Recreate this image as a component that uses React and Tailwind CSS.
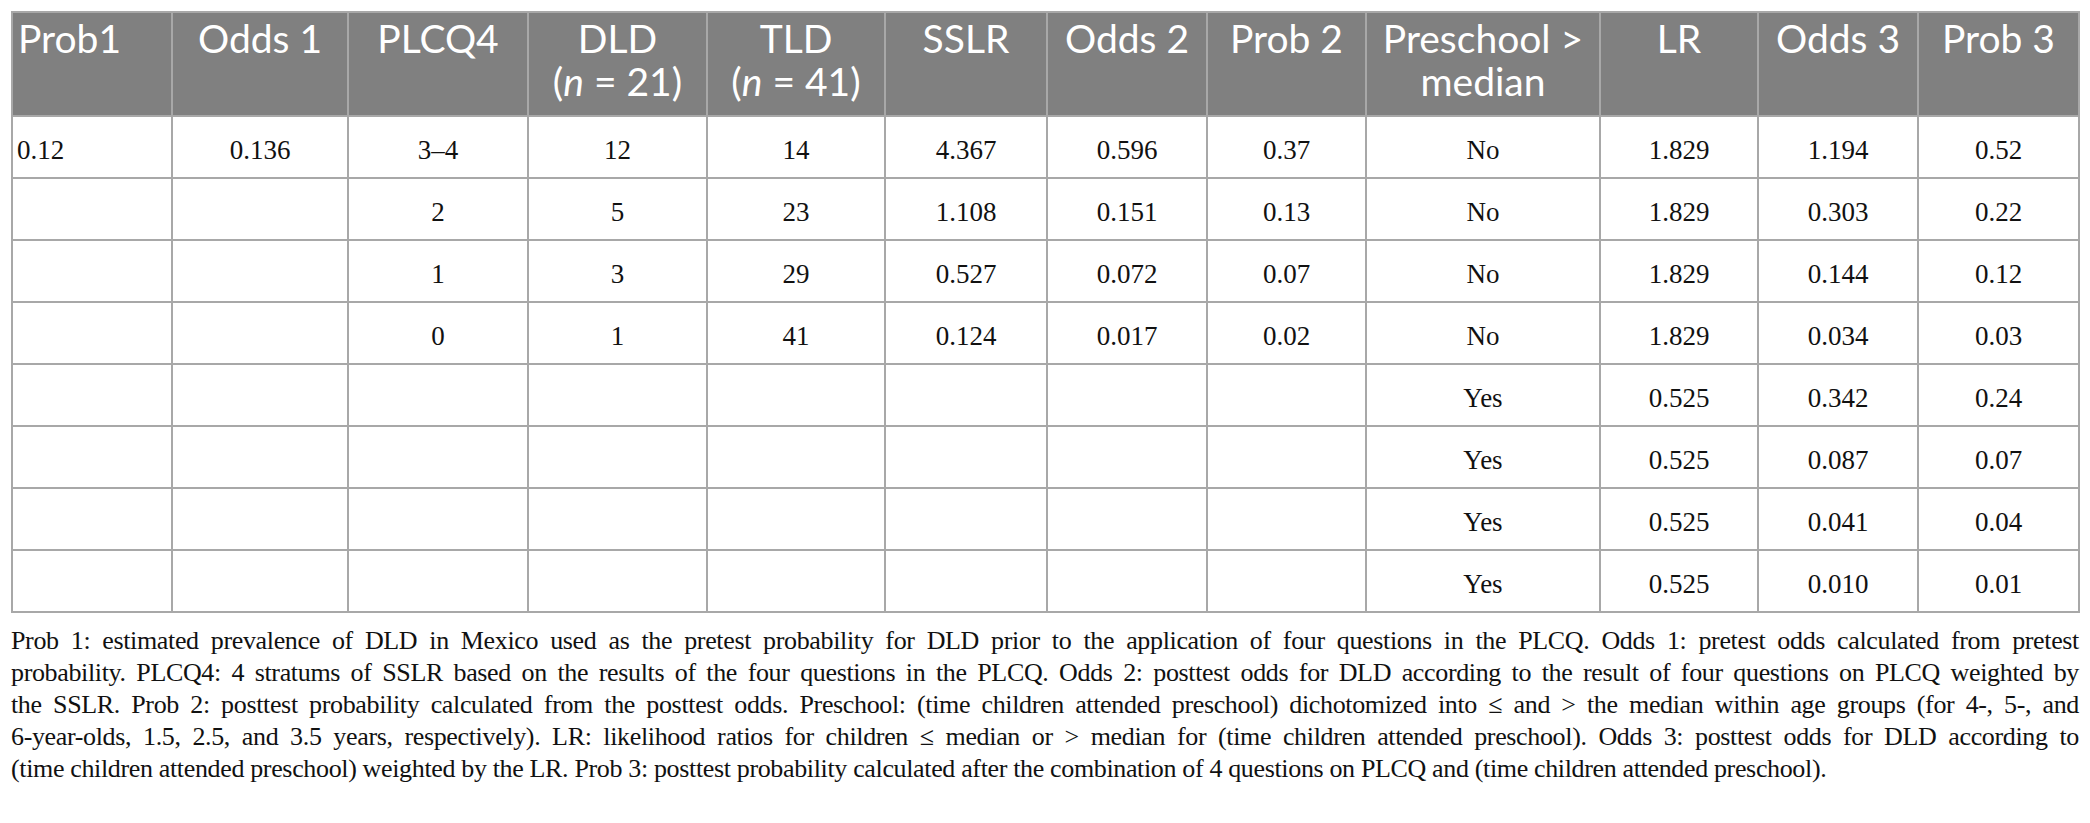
const columns = [
  { key: 'prob1', label: ['Prob1'], width: 'w-[160px]', left: true },
  { key: 'odds1', label: ['Odds 1'], width: 'w-[176px]' },
  { key: 'plcq4', label: ['PLCQ4'], width: 'w-[180px]' },
  { key: 'dld', label: ['DLD', 21], width: 'w-[179px]' },
  { key: 'tld', label: ['TLD', 41], width: 'w-[178px]' },
  { key: 'sslr', label: ['SSLR'], width: 'w-[162px]' },
  { key: 'odds2', label: ['Odds 2'], width: 'w-[160px]' },
  { key: 'prob2', label: ['Prob 2'], width: 'w-[159px]' },
  { key: 'pre', label: ['Preschool >', 'median'], width: 'w-[234px]' },
  { key: 'lr', label: ['LR'], width: 'w-[158px]' },
  { key: 'odds3', label: ['Odds 3'], width: 'w-[160px]' },
  { key: 'prob3', label: ['Prob 3'], width: 'w-[161px]' },
];

const rows = [
  ['0.12', '0.136', '3–4', '12', '14', '4.367', '0.596', '0.37', 'No', '1.829', '1.194', '0.52'],
  ['', '', '2', '5', '23', '1.108', '0.151', '0.13', 'No', '1.829', '0.303', '0.22'],
  ['', '', '1', '3', '29', '0.527', '0.072', '0.07', 'No', '1.829', '0.144', '0.12'],
  ['', '', '0', '1', '41', '0.124', '0.017', '0.02', 'No', '1.829', '0.034', '0.03'],
  ['', '', '', '', '', '', '', '', 'Yes', '0.525', '0.342', '0.24'],
  ['', '', '', '', '', '', '', '', 'Yes', '0.525', '0.087', '0.07'],
  ['', '', '', '', '', '', '', '', 'Yes', '0.525', '0.041', '0.04'],
  ['', '', '', '', '', '', '', '', 'Yes', '0.525', '0.010', '0.01'],
];

// footnote lines, broken where the reference breaks them
const notes = [
  'Prob 1: estimated prevalence of DLD in Mexico used as the pretest probability for DLD prior to the application of four questions in the PLCQ. Odds 1: pretest odds calculated from pretest',
  'probability. PLCQ4: 4 stratums of SSLR based on the results of the four questions in the PLCQ. Odds 2: posttest odds for DLD according to the result of four questions on PLCQ weighted by',
  'the SSLR. Prob 2: posttest probability calculated from the posttest odds. Preschool: (time children attended preschool) dichotomized into ≤ and > the median within age groups (for 4-, 5-, and',
  '6-year-olds, 1.5, 2.5, and 3.5 years, respectively). LR: likelihood ratios for children ≤ median or > median for (time children attended preschool). Odds 3: posttest odds for DLD according to',
];

function HeaderLabel({ label }) {
  const [first, n] = label;
  if (typeof n === 'number') {
    return (
      <>
        <div>{first}</div>
        <div>
          (<span className="italic">n</span> = {n})
        </div>
      </>
    );
  }
  return label.map((line) => <div key={line}>{line}</div>);
}

export default function App() {
  return (
    <div className="bg-white px-[11px] pt-[11px] min-h-[823px]">
      <table className="table-fixed border-collapse w-[2068px]">
        <colgroup>
          {columns.map((c) => (
            <col key={c.key} className={c.width} />
          ))}
        </colgroup>
        <thead>
          <tr className="h-[104px]">
            {columns.map((c) => (
              <th
                key={c.key}
                className={`align-top border-2 border-[#a8a8a8] bg-[#808080] pt-[4px] px-[5px] font-normal text-white text-[39px] leading-[43px] font-['Lato','Noto_Sans',sans-serif] ${
                  c.left ? 'text-left' : 'text-center'
                }`}
              >
                <HeaderLabel label={c.label} />
              </th>
            ))}
          </tr>
        </thead>
        <tbody>
          {rows.map((row, i) => (
            <tr key={i} className="h-[62px]">
              {row.map((cell, j) => (
                <td
                  key={j}
                  className={`border-2 border-[#a8a8a8] px-[4px] pt-[5px] align-middle text-[27px] leading-[32px] text-[#111] font-['Liberation_Serif','Times_New_Roman',serif] ${
                    columns[j].left ? 'text-left' : 'text-center'
                  }`}
                >
                  {cell}
                </td>
              ))}
            </tr>
          ))}
        </tbody>
      </table>

      <div className="mt-[12px] w-[2068px] text-[#111] tracking-[-0.35px] font-['Liberation_Serif','Times_New_Roman',serif]">
        {notes.map((line) => (
          <p
            key={line}
            className="h-[32px] text-[26px] leading-[32px] whitespace-nowrap text-justify [text-align-last:justify]"
          >
            {line}
          </p>
        ))}
        <p className="h-[32px] text-[26px] leading-[32px] whitespace-nowrap">
          (time children attended preschool) weighted by the LR. Prob 3: posttest probability calculated after the combination of 4 questions on PLCQ and (time children attended preschool).
        </p>
      </div>
    </div>
  );
}
